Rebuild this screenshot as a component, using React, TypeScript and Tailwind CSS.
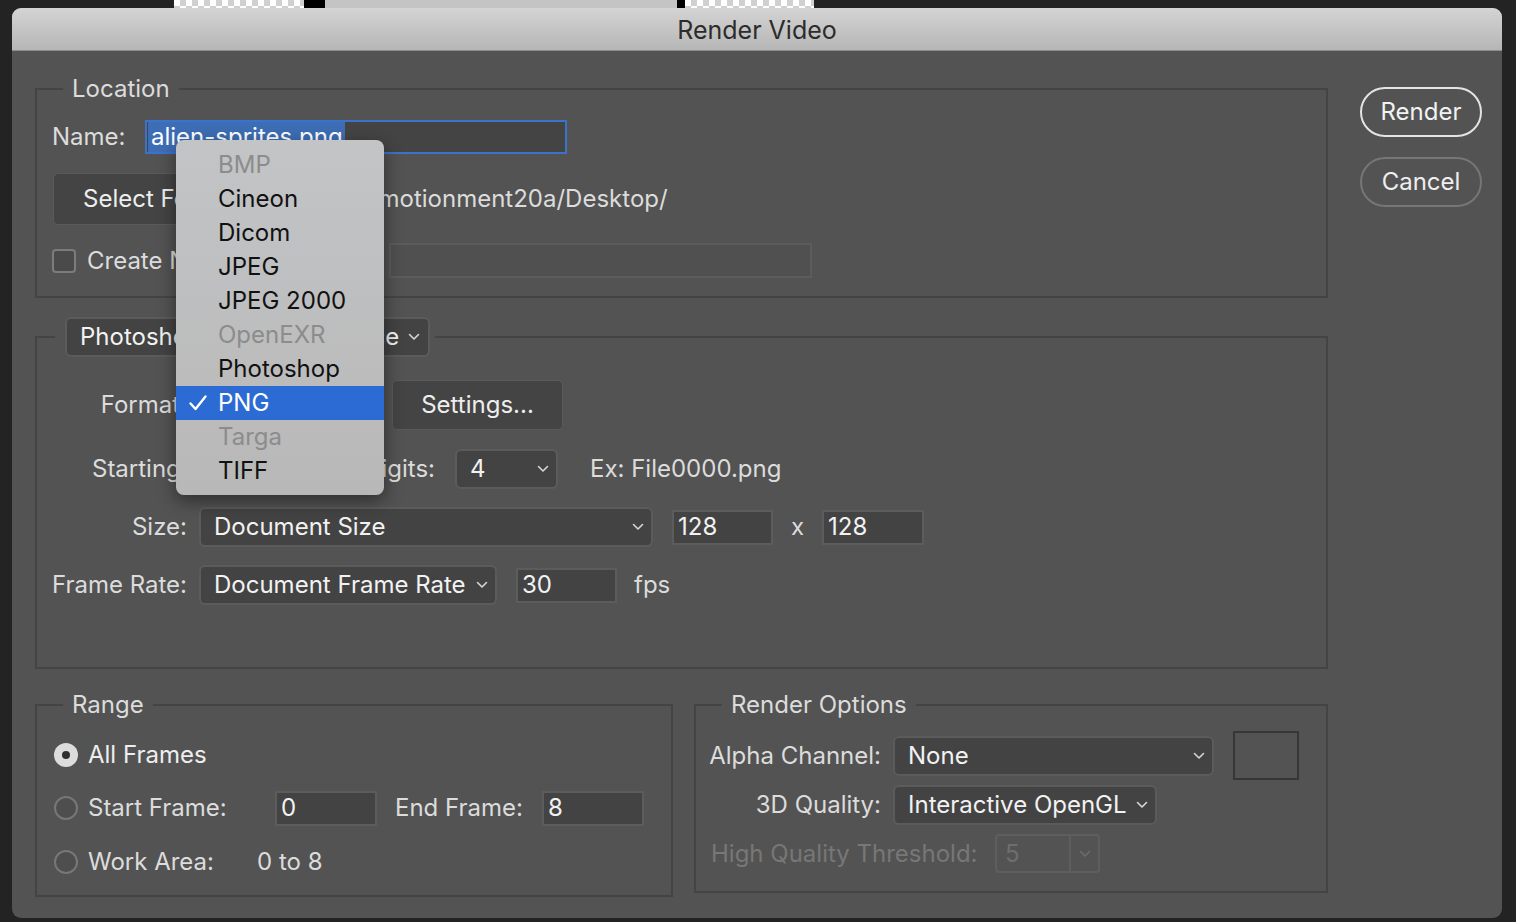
import { ReactElement, ReactNode } from 'react';

const Chevron = ({ color = '#d6d6d6' }: { color?: string }): ReactElement => (
  <svg width="12" height="8" viewBox="0 0 12 8" fill="none">
    <path d="M1.5 1.5 6 6l4.5-4.5" stroke={color} strokeWidth="1.6" strokeLinecap="round" strokeLinejoin="round" />
  </svg>
);

// right aligned label, spills to the left when too long
const Label = ({ w, children }: { w: string; children: ReactNode }): ReactElement => (
  <div className={`${w} shrink-0 flex justify-end`}>
    <span className="whitespace-nowrap">{children}</span>
  </div>
);

const Select = ({ w, children }: { w: string; children: ReactNode }): ReactElement => (
  <div className={`${w} h-[40px] flex items-center justify-between pl-[13px] pr-[7px] bg-[#434343] border-2 border-[#5b5b5b] rounded-[6px] text-[#f2f2f2]`}>
    <span>{children}</span>
    <Chevron />
  </div>
);

const Field = ({ w, children }: { w: string; children?: ReactNode }): ReactElement => (
  <div className={`${w} shrink-0 h-[35px] flex items-center pl-[4px] bg-[#434343] border-2 border-[#5c5c5c] text-[#f2f2f2]`}>
    {children}
  </div>
);

const Radio = ({ on = false }: { on?: boolean }): ReactElement =>
  on ? (
    <div className="w-[24px] h-[24px] rounded-full bg-[#dcdcdc] flex items-center justify-center shrink-0">
      <div className="w-[8px] h-[8px] rounded-full bg-[#2e2e2e]" />
    </div>
  ) : (
    <div className="w-[24px] h-[24px] rounded-full border-2 border-[#777] bg-[#4e4e4e] shrink-0" />
  );

const formats = [
  { name: 'BMP', off: true },
  { name: 'Cineon' },
  { name: 'Dicom' },
  { name: 'JPEG' },
  { name: 'JPEG 2000' },
  { name: 'OpenEXR', off: true },
  { name: 'Photoshop' },
  { name: 'PNG', on: true },
  { name: 'Targa', off: true },
  { name: 'TIFF' },
];

const App = (): ReactElement => {
  return (
    <div className="w-[1516px] h-[922px] overflow-hidden whitespace-nowrap bg-[#232323] font-['Inter',sans-serif] text-[24px] text-[#dcdcdc]">
      {/* bits of the canvas behind the dialog */}
      <div className="h-[8px] flex">
        <div className="w-[174px]" />
        <div className="w-[130px] bg-[conic-gradient(#d0d0d0_25%,#ffffff_0_50%,#d0d0d0_0_75%,#ffffff_0)] bg-[length:12px_12px]" />
        <div className="w-[21px] bg-black" />
        <div className="w-[352px] bg-[#c4c4c4]" />
        <div className="w-[8px] bg-black" />
        <div className="w-[129px] bg-[conic-gradient(#d0d0d0_25%,#ffffff_0_50%,#d0d0d0_0_75%,#ffffff_0)] bg-[length:12px_12px]" />
      </div>

      <div className="ml-[12px] w-[1490px] h-[910px] rounded-[9px] overflow-hidden bg-[#535353] flex flex-col">
        {/* title bar */}
        <div className="h-[43px] shrink-0 flex items-center justify-center pt-[4px] bg-linear-to-b from-[#d4d4d4] to-[#b6b6b6] border-b border-[#8e8e8e] text-[25px] text-[#2c2c2c]">
          Render Video
        </div>

        <div className="relative flex pl-[23px] pt-[24px]">
          <div className="w-[1293px] flex flex-col">
            {/* Location */}
            <fieldset className="border-2 border-[#444444]">
              <legend className="ml-[26px] px-[9px] leading-[28px]">Location</legend>
              <div className="pl-[15px] pt-[17px] pb-[18px]">
                <div className="h-[34px] flex items-center">
                  <span className="w-[93px]">Name:</span>
                  <div className="w-[422px] h-[34px] flex items-center pl-[1px] bg-[#444444] border-2 border-[#3b72cc]">
                    <span className="h-[30px] leading-[30px] pl-[3px] pr-[2px] bg-[#3d6db4] text-white">alien-sprites.png</span>
                  </div>
                </div>
                <div className="mt-[19px] h-[52px] flex items-center">
                  <div className="ml-[1px] w-[222px] h-[52px] flex items-center pl-[29px] bg-[#444444] border border-[#5a5a5a] rounded-[5px] text-[#eeeeee]">
                    Select Folder...
                  </div>
                  <span className="ml-[20px]">/Users/motionment20a/Desktop/</span>
                </div>
                <div className="mt-[18px] h-[35px] flex items-center">
                  <div className="w-[24px] h-[24px] rounded-[4px] border-2 border-[#7c7c7c] bg-[#4a4a4a] shrink-0" />
                  <span className="w-[313px] pl-[11px]">Create New Subfolder</span>
                  <div className="w-[423px] h-[35px] bg-[#505050] border-2 border-[#5c5c5c]" />
                </div>
              </div>
            </fieldset>

            {/* Sequence */}
            <fieldset className="mt-[19px] border-2 border-[#444444]">
              <legend className="ml-[18px] pl-[10px] pr-[5px]">
                <div className="w-[365px] h-[40px] flex items-center justify-between pl-[13px] pr-[8px] bg-[#434343] border-2 border-[#5b5b5b] rounded-[6px] text-[#f2f2f2]">
                  <span>Photoshop Image Sequence</span>
                  <Chevron />
                </div>
              </legend>
              <div className="pl-[15px] pt-[23px] pb-[62px]">
                <div className="h-[50px] flex items-center">
                  <Label w="w-[135px]">Format:</Label>
                  <div className="ml-[12px]">
                    <Select w="w-[177px]">PNG</Select>
                  </div>
                  <div className="ml-[16px] w-[171px] h-[50px] flex items-center justify-center bg-[#444444] border border-[#5a5a5a] rounded-[5px] text-[#eeeeee]">
                    Settings...
                  </div>
                </div>
                <div className="mt-[19px] h-[40px] flex items-center">
                  <span className="ml-[40px] w-[118px]">Starting #:</span>
                  <Field w="w-[80px]">0</Field>
                  <Label w="w-[145px]">Digits:</Label>
                  <div className="ml-[20px]">
                    <Select w="w-[103px]">4</Select>
                  </div>
                  <span className="ml-[32px]">Ex: File0000.png</span>
                </div>
                <div className="mt-[18px] h-[40px] flex items-center">
                  <Label w="w-[135px]">Size:</Label>
                  <div className="ml-[12px]">
                    <Select w="w-[454px]">Document Size</Select>
                  </div>
                  <div className="ml-[19px]">
                    <Field w="w-[101px]">128</Field>
                  </div>
                  <span className="w-[49px] text-center">x</span>
                  <Field w="w-[102px]">128</Field>
                </div>
                <div className="mt-[18px] h-[40px] flex items-center">
                  <Label w="w-[135px]">Frame Rate:</Label>
                  <div className="ml-[12px]">
                    <Select w="w-[298px]">Document Frame Rate</Select>
                  </div>
                  <div className="ml-[19px]">
                    <Field w="w-[101px]">30</Field>
                  </div>
                  <span className="ml-[17px]">fps</span>
                </div>
              </div>
            </fieldset>

            <div className="mt-[22px] flex items-start gap-[21px]">
              {/* Range */}
              <fieldset className="w-[638px] border-2 border-[#444444]">
                <legend className="ml-[26px] px-[9px] leading-[28px]">Range</legend>
                <div className="pl-[17px] pt-[19px] pb-[16px]">
                  <div className="h-[34px] flex items-center">
                    <Radio on />
                    <span className="ml-[10px] text-[#eeeeee]">All Frames</span>
                  </div>
                  <div className="mt-[19px] h-[34px] flex items-center">
                    <Radio />
                    <span className="ml-[10px] w-[187px]">Start Frame:</span>
                    <Field w="w-[102px]">0</Field>
                    <span className="ml-[18px] w-[147px]">End Frame:</span>
                    <Field w="w-[102px]">8</Field>
                  </div>
                  <div className="mt-[20px] h-[34px] flex items-center">
                    <Radio />
                    <span className="ml-[10px] w-[169px]">Work Area:</span>
                    <span>0 to 8</span>
                  </div>
                </div>
              </fieldset>

              {/* Render Options */}
              <fieldset className="w-[634px] border-2 border-[#444444]">
                <legend className="ml-[26px] px-[9px] leading-[28px]">Render Options</legend>
                <div className="pl-[15px] pt-[12px] pb-[18px]">
                  <div className="h-[49px] flex items-center">
                    <Label w="w-[170px]">Alpha Channel:</Label>
                    <div className="ml-[12px]">
                      <Select w="w-[321px]">None</Select>
                    </div>
                    <div className="ml-[19px] w-[66px] h-[49px] border-2 border-[#363636]" />
                  </div>
                  <div className="mt-[5px] h-[40px] flex items-center">
                    <Label w="w-[170px]">3D Quality:</Label>
                    <div className="ml-[12px]">
                      <Select w="w-[264px]">Interactive OpenGL</Select>
                    </div>
                  </div>
                  <div className="mt-[9px] h-[39px] flex items-center">
                    <span className="w-[284px] text-[#777777]">High Quality Threshold:</span>
                    <div className="w-[105px] h-[39px] flex border-2 border-[#5e5e5e] rounded-[4px] text-[#6e6e6e]">
                      <span className="w-[74px] pl-[8px] leading-[35px] border-r-2 border-[#5e5e5e]">5</span>
                      <span className="flex-1 flex items-center justify-center">
                        <Chevron color="#6c6c6c" />
                      </span>
                    </div>
                  </div>
                </div>
              </fieldset>
            </div>
          </div>

          {/* buttons */}
          <div className="ml-[32px] pt-[12px] flex flex-col gap-[20px]">
            <div className="w-[122px] h-[50px] rounded-full border-2 border-[#e4e4e4] flex items-center justify-center text-[#f2f2f2]">
              Render
            </div>
            <div className="w-[122px] h-[50px] rounded-full border-2 border-[#767676] flex items-center justify-center text-[#eeeeee]">
              Cancel
            </div>
          </div>

          {/* open format menu */}
          <div className="absolute left-[164px] top-[89px] w-[208px] pt-[8px] pb-[7px] rounded-[8px] bg-linear-to-b from-[#c3c4c6] to-[#b8b8b8] shadow-[0_6px_18px_rgba(0,0,0,0.45)] text-[24px]">
            {formats.map((f) => (
              <div
                key={f.name}
                className={`h-[34px] flex items-center ${f.on ? 'bg-[#2c6bd3] text-white' : f.off ? 'text-[#8c8c8c]' : 'text-[#111111]'}`}
              >
                <span className="w-[42px] flex justify-center pl-[2px]">
                  {f.on && (
                    <svg width="20" height="18" viewBox="0 0 20 18" fill="none">
                      <path d="M2.5 9.5 7.5 15 17.5 2.5" stroke="white" strokeWidth="2.4" strokeLinecap="round" strokeLinejoin="round" />
                    </svg>
                  )}
                </span>
                <span>{f.name}</span>
              </div>
            ))}
          </div>
        </div>
      </div>
    </div>
  );
};

export default App;
